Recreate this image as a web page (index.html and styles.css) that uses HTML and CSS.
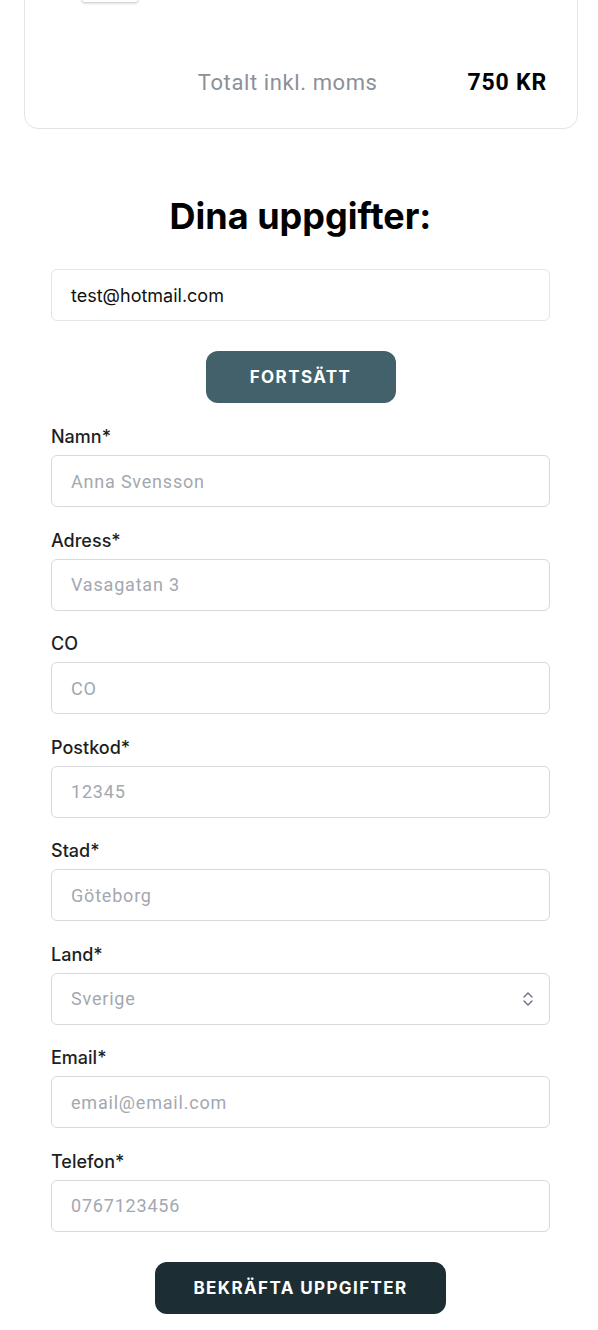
FILE: index.html
```html
<!DOCTYPE html>
<html lang="sv">
<head>
<meta charset="utf-8">
<title>Dina uppgifter</title>
<link rel="stylesheet" href="styles.css">
</head>
<body>
<div class="card">
  <div class="product">
    <div class="thumb"></div>
  </div>
  <div class="total">
    <span class="total-label">Totalt inkl. moms</span>
    <span class="total-price">750 KR</span>
  </div>
</div>

<main class="details">
  <h1 class="title">Dina uppgifter:</h1>
  <div class="input filled">test@hotmail.com</div>
  <button class="btn btn-continue">FORTSÄTT</button>

  <form class="fields">
    <div class="field"><label class="label">Namn*</label><div class="input">Anna Svensson</div></div>
    <div class="field"><label class="label">Adress*</label><div class="input">Vasagatan 3</div></div>
    <div class="field"><label class="label">CO</label><div class="input">CO</div></div>
    <div class="field"><label class="label">Postkod*</label><div class="input">12345</div></div>
    <div class="field"><label class="label">Stad*</label><div class="input">Göteborg</div></div>
    <div class="field"><label class="label">Land*</label>
      <div class="input select">Sverige
        <svg class="chev" width="14" height="18" viewBox="0 0 14 18"><path d="M3 7 L7 3 L11 7 M3 11 L7 15 L11 11" fill="none" stroke="#6b7280" stroke-width="1.4" stroke-linecap="round" stroke-linejoin="round"/></svg>
      </div>
    </div>
    <div class="field"><label class="label">Email*</label><div class="input">email@email.com</div></div>
    <div class="field"><label class="label">Telefon*</label><div class="input">0767123456</div></div>
  </form>

  <button class="btn btn-confirm">BEKRÄFTA UPPGIFTER</button>
</main>
</body>
</html>
```

FILE: styles.css
```css
* { box-sizing: border-box; }
html, body { margin: 0; padding: 0; background: #fff; }
body { font-family: Inter, "Noto Sans", sans-serif; color: #111; }

.card {
  margin: -100px 20px 0 24px;
  border: 1px solid #e2e4e8;
  border-radius: 14px;
  padding: 0 30px 32px 57px;
  background: #fff;
}
.product { height: 101px; display: flex; align-items: flex-end; }
.thumb {
  width: 56px; height: 80px;
  background: #fff;
  border-radius: 3px;
  box-shadow: 0 1px 3px rgba(0,0,0,0.25);
}
.total {
  margin-top: 66px;
  display: flex; justify-content: flex-end; align-items: center;
  gap: 90px;
  height: 28px;
}
.total-label { font-family: Roboto, sans-serif; font-size: 22px; letter-spacing: 0.6px; color: #8b9099; }
.total-price { font-family: Roboto, sans-serif; font-size: 23px; letter-spacing: 0.8px; font-weight: 700; color: #000; }

.details {
  padding: 0 48px 0 51px;
  display: flex; flex-direction: column; align-items: center;
}
.title {
  margin: 65px 0 0;
  font-size: 36px; font-weight: 700; line-height: 44px;
  color: #000;
}
.input {
  width: 100%;
  height: 52px;
  border: 1px solid #d6d9de;
  border-radius: 6px;
  padding: 0 19px;
  display: flex; align-items: center;
  font-family: Roboto, sans-serif; font-size: 18px; letter-spacing: 0.8px; color: #a3a8b0;
  background: #fff;
}
.input.filled {
  margin-top: 31px;
  border-color: #e3e5e9;
  font-family: Inter, sans-serif; color: #111; font-size: 18px; letter-spacing: 0;
}
.select { justify-content: space-between; padding-right: 14px; }

.btn {
  border: none;
  height: 52px;
  border-radius: 12px;
  color: #fff;
  font-family: Inter, sans-serif; font-weight: 700; font-size: 17px;
  letter-spacing: 1.4px;
}
.btn-continue { margin-top: 30px; background: #43616a; width: 190px; padding: 0; }
.btn-confirm { margin-top: 30px; background: #1c2e33; width: 291px; padding: 0; }

.fields {
  width: 100%;
  margin-top: 20px;
  display: flex; flex-direction: column; gap: 19.5px;
}
.field { display: flex; flex-direction: column; gap: 5px; }
.label {
  font-size: 18px; line-height: 27px; color: #1d1f24; font-weight: 500;
}
```
